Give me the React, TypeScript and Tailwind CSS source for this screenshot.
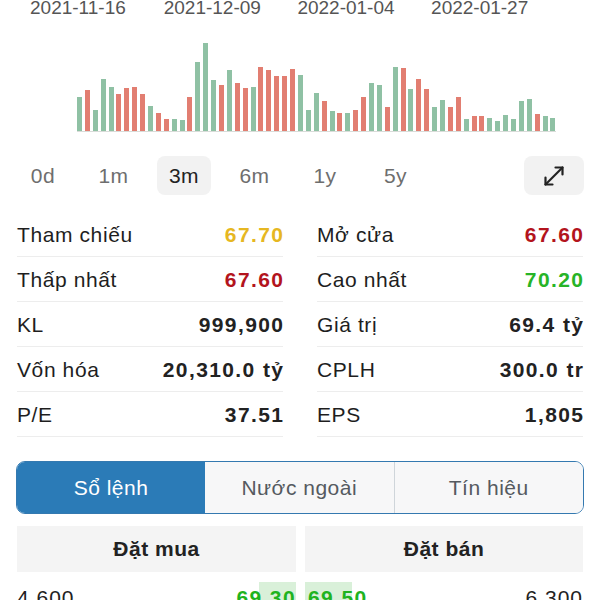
import React from 'react';

const dates = ['2021-11-16', '2021-12-09', '2022-01-04', '2022-01-27'];

// [height px, up?]
const bars: [number, boolean][] = [
  [34, true], [41, false], [21, true], [52, true], [44, true], [37, false], [43, false], [44, false],
  [37, false], [25, true], [18, false], [12, false], [12, true], [11, true], [34, false], [69, true],
  [88, true], [51, true], [46, false], [61, true], [48, false], [43, false], [44, true], [64, false],
  [61, false], [55, false], [55, false], [62, false], [56, true], [21, true], [38, true], [30, false],
  [20, true], [18, false], [18, true], [21, false], [34, false], [48, true], [46, true], [24, false],
  [64, true], [63, false], [42, true], [52, false], [42, false], [24, true], [31, true], [24, false],
  [34, false], [12, true], [15, false], [15, false], [13, true], [10, true], [16, true], [12, true],
  [30, true], [32, true], [17, false], [15, true], [13, true],
];

const periods = ['0d', '1m', '3m', '6m', '1y', '5y'];

const stats = [
  { l: 'Tham chiếu', v: '67.70', c: 'text-[#e6b722]', rl: 'Mở cửa', rv: '67.60', rc: 'text-[#b3141d]' },
  { l: 'Thấp nhất', v: '67.60', c: 'text-[#b3141d]', rl: 'Cao nhất', rv: '70.20', rc: 'text-[#27b427]' },
  { l: 'KL', v: '999,900', c: 'text-[#222]', rl: 'Giá trị', rv: '69.4 tỷ', rc: 'text-[#222]' },
  { l: 'Vốn hóa', v: '20,310.0 tỷ', c: 'text-[#222]', rl: 'CPLH', rv: '300.0 tr', rc: 'text-[#222]' },
  { l: 'P/E', v: '37.51', c: 'text-[#222]', rl: 'EPS', rv: '1,805', rc: 'text-[#222]' },
];

const StatCell = ({ label, value, color }: { label: string; value: string; color: string }) => (
  <div className="flex h-[45px] items-center justify-between border-b border-[#ededed] pt-[2px]">
    <span className="text-[21px] tracking-[0.6px] text-[#1e1e1e]">{label}</span>
    <span className={`-mr-[1.4px] text-[21px] font-bold tracking-[1.4px] ${color}`}>{value}</span>
  </div>
);

export default function App() {
  return (
    <div className="h-[600px] w-[600px] overflow-hidden bg-white font-['Liberation_Sans',Arial,sans-serif]">
      {/* date axis */}
      <div className="-mt-[2px] flex h-[20px] pl-[30px] text-[19px] leading-[20px] text-[#555]">
        {dates.map((d) => (
          <span key={d} className="w-[133.7px] shrink-0">{d}</span>
        ))}
      </div>

      {/* volume chart */}
      <div className="ml-[77px] w-[479px]">
        <div className="flex h-[113px] items-end gap-[2.9px]">
          {bars.map(([h, up], i) => (
            <div
              key={i}
              className={`w-[5px] shrink-0 ${up ? 'bg-[#8fc1a4]' : 'bg-[#e27e71]'}`}
              style={{ height: h }}
            />
          ))}
        </div>
        <div className="h-[1px] bg-[#d9dcd9]" />
      </div>

      {/* period tabs */}
      <div className="mt-[24px] flex h-[39px] items-center px-[16px]">
        <div className="flex gap-[16.5px]">
          {periods.map((p) => (
            <div
              key={p}
              className={`flex h-[39px] w-[54px] items-center justify-center rounded-lg text-[21px] tracking-[0.5px] ${
                p === '3m' ? 'bg-[#f2f2f2] text-[#222]' : 'text-[#6e6e6e]'
              }`}
            >
              {p}
            </div>
          ))}
        </div>
        <button className="ml-auto flex h-[39px] w-[60px] items-center justify-center rounded-lg bg-[#f2f2f2]">
          <svg width="22" height="22" viewBox="0 0 22 22" fill="none" stroke="#222" strokeWidth="2.2" strokeLinecap="round" strokeLinejoin="round">
            <path d="M2.5 19.5 19.5 2.5" />
            <path d="M12.5 2.5h7v7" />
            <path d="M2.5 12.5v7h7" />
          </svg>
        </button>
      </div>

      {/* stats */}
      <div className="mt-[17px] grid grid-cols-2 gap-x-[34px] px-[17px]">
        <div>
          {stats.map((s) => (
            <StatCell key={s.l} label={s.l} value={s.v} color={s.c} />
          ))}
        </div>
        <div>
          {stats.map((s) => (
            <StatCell key={s.rl} label={s.rl} value={s.rv} color={s.rc} />
          ))}
        </div>
      </div>

      {/* segmented control */}
      <div className="mx-[16px] mt-[24px] flex h-[53px] overflow-hidden rounded-[9px] border-[1.5px] border-[#3479b0] text-[21px] tracking-[0.5px]">
        <div className="flex w-[188px] items-center justify-center bg-[#2b7bb7] text-white">Sổ lệnh</div>
        <div className="flex flex-1 items-center justify-center bg-[#f7f7f8] text-[#555a60]">Nước ngoài</div>
        <div className="flex flex-1 items-center justify-center border-l border-[#cfd5da] bg-[#f7f7f8] text-[#555a60]">Tín hiệu</div>
      </div>

      {/* order book header */}
      <div className="mt-[12px] flex gap-[9px] px-[17px]">
        <div className="flex h-[46px] w-[279px] items-center justify-center bg-[#f4f4f4] text-[21px] font-bold tracking-[0.5px] text-[#222]">
          Đặt mua
        </div>
        <div className="flex h-[46px] flex-1 items-center justify-center bg-[#f4f4f4] text-[21px] font-bold tracking-[0.5px] text-[#222]">
          Đặt bán
        </div>
      </div>

      {/* first order row */}
      <div className="mt-[10px] flex gap-[9px] px-[17px] text-[21px]">
        <div className="relative flex h-[32px] w-[279px] items-center justify-between">
          <div className="absolute inset-y-0 right-0 w-[37px] bg-[#d9f0d9]" />
          <span className="relative tracking-[1px] text-[#222]">4,600</span>
          <span className="relative font-bold tracking-[1.4px] text-[#1fb31f]">69.30</span>
        </div>
        <div className="relative flex h-[32px] flex-1 items-center justify-between">
          <div className="absolute inset-y-0 left-0 w-[47px] bg-[#d9f0d9]" />
          <span className="relative pl-[3px] font-bold tracking-[1.4px] text-[#1fb31f]">69.50</span>
          <span className="relative tracking-[1px] text-[#222]">6,300</span>
        </div>
      </div>
    </div>
  );
}
